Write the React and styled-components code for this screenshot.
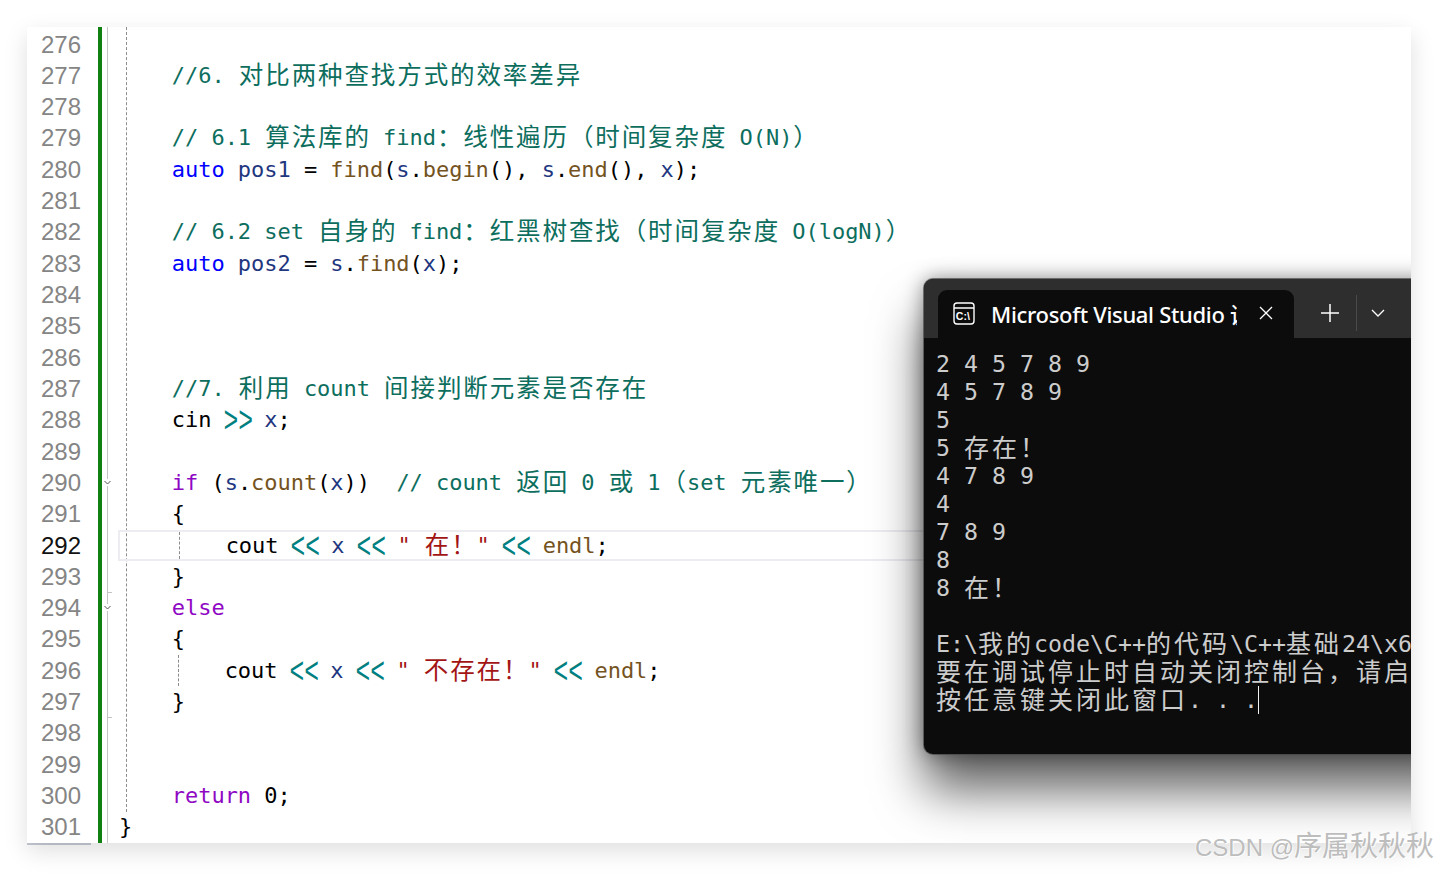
import React from "react";
import styled, { createGlobalStyle } from "styled-components";

const ROW_H = 31.32;

const GlobalStyle = createGlobalStyle`
  html, body {
    margin: 0;
    background: #fff;
  }
`;

const Page = styled.div`
  position: relative;
  width: 1438px;
  height: 873px;
  padding: 27px 27px 0;
  box-sizing: border-box;
  overflow: hidden;
`;

const Card = styled.div`
  position: relative;
  display: flex;
  height: 816px;
  padding-top: 1.5px;
  box-sizing: border-box;
  background: #fff;
  overflow: hidden;
  box-shadow: 0 8px 22px rgba(0, 0, 0, 0.13);
`;

const ScrollSliver = styled.div`
  width: 64px;
  height: 2px;
  background: #c6cbd6;
`;

const Gutter = styled.div`
  width: 71px;
  padding-left: 14px;
  box-sizing: border-box;
  flex: none;
`;

const LineNo = styled.div`
  height: ${ROW_H}px;
  line-height: ${ROW_H}px;
  font-family: "Liberation Sans", sans-serif;
  font-size: 24px;
  color: ${(p) => (p.$active ? "#111" : "#858585")};
`;

const ChangeBar = styled.div`
  width: 4px;
  flex: none;
  margin-top: -2px;
  background: #108010;
`;

const FoldColumn = styled.div`
  width: 17px;
  flex: none;
  margin-top: -2px;
  padding-top: 2px;
  position: relative;
  &::before {
    content: "";
    position: absolute;
    left: 5px;
    top: 0;
    bottom: 0;
    width: 1px;
    background: #c4c4c4;
  }
`;

const FoldCell = styled.div`
  position: relative;
  height: ${ROW_H}px;
  ${(p) =>
    p.$end &&
    `&::after {
      content: "";
      position: absolute;
      left: 5px;
      top: 0;
      width: 5px;
      height: 1px;
      background: #c4c4c4;
    }`}
`;

const FoldChevron = styled.svg`
  position: absolute;
  left: 1px;
  top: 12px;
  width: 9px;
  height: 7px;
  background: #fff;
`;

const CodeColumn = styled.div`
  position: relative;
  flex: 1;
  min-width: 0;
  &::before {
    content: "";
    position: absolute;
    left: 7px;
    top: -2px;
    height: 785px;
    border-left: 1px dashed #8c8c8c;
  }
`;

const Row = styled.div`
  position: relative;
  height: ${ROW_H}px;
  box-sizing: border-box;
  white-space: pre;
  font-family: "DejaVu Sans Mono", monospace;
  font-size: 22px;
  letter-spacing: -0.04px;
  line-height: ${ROW_H}px;
  color: #000;
  ${(p) =>
    p.$active &&
    `
    border: 2px solid #ececf1;
    border-right: 0;
    margin-left: -1px;
    padding-left: 0;
    line-height: ${ROW_H - 4}px;
  `}
  ${(p) =>
    p.$guide &&
    `&::before {
      content: "";
      position: absolute;
      left: 59px;
      top: 0;
      bottom: 0;
      border-left: 1px dashed #8c8c8c;
    }`}
`;

const colors = {
  comment: "#0d6e5e",
  keyword: "#0000ff",
  control: "#8f08c4",
  variable: "#1f377f",
  func: "#74531f",
  string: "#a31515",
  operator: "#008080",
  plain: "#000",
};

const Tok = styled.span`
  color: ${(p) => colors[p.$kind]};
`;

// the stream operators are drawn tall and thin in the editor font
const StreamOp = styled.span`
  display: inline-block;
  font-family: "Liberation Mono", monospace;
  letter-spacing: 0;
  color: ${colors.operator};
  transform: scale(1.12, 1.7);
  transform-origin: 50% 42%;
`;

const CodeCjk = styled.span`
  font-family: "Noto Sans CJK SC", sans-serif;
  font-size: 24.5px;
  letter-spacing: 1.9px;
  line-height: 0;
  vertical-align: -1px;
  margin: 0 -1px 0 1px;
`;

const splitCjk = (text) => text.split(/([\u3000-\u9fff\uff00-\uffef]+)/);

const CodeText = ({ kind, text }) =>
  kind === "operator" ? (
    <StreamOp>{text}</StreamOp>
  ) : (
    <Tok $kind={kind}>
      {splitCjk(text).map((part, i) =>
        i % 2 ? <CodeCjk key={i}>{part}</CodeCjk> : part
      )}
    </Tok>
  );

const C = "comment";
const K = "keyword";
const R = "control";
const V = "variable";
const F = "func";
const S = "string";
const O = "operator";
const P = "plain";

const cout = (msg) => [
  [P, "    cout "],
  [O, "<<"],
  [P, " "],
  [V, "x"],
  [P, " "],
  [O, "<<"],
  [P, " "],
  [S, msg],
  [P, " "],
  [O, "<<"],
  [P, " "],
  [F, "endl"],
  [P, ";"],
];

const lines = [
  { n: 276, code: [] },
  { n: 277, code: [[C, "    //6. 对比两种查找方式的效率差异"]] },
  { n: 278, code: [] },
  { n: 279, code: [[C, "    // 6.1 算法库的 find：线性遍历（时间复杂度 O(N)）"]] },
  {
    n: 280,
    code: [
      [K, "    auto "],
      [V, "pos1"],
      [P, " = "],
      [F, "find"],
      [P, "("],
      [V, "s"],
      [P, "."],
      [F, "begin"],
      [P, "(), "],
      [V, "s"],
      [P, "."],
      [F, "end"],
      [P, "(), "],
      [V, "x"],
      [P, ");"],
    ],
  },
  { n: 281, code: [] },
  { n: 282, code: [[C, "    // 6.2 set 自身的 find：红黑树查找（时间复杂度 O(logN)）"]] },
  {
    n: 283,
    code: [
      [K, "    auto "],
      [V, "pos2"],
      [P, " = "],
      [V, "s"],
      [P, "."],
      [F, "find"],
      [P, "("],
      [V, "x"],
      [P, ");"],
    ],
  },
  { n: 284, code: [] },
  { n: 285, code: [] },
  { n: 286, code: [] },
  { n: 287, code: [[C, "    //7. 利用 count 间接判断元素是否存在"]] },
  {
    n: 288,
    code: [
      [P, "    cin "],
      [O, ">>"],
      [P, " "],
      [V, "x"],
      [P, ";"],
    ],
  },
  { n: 289, code: [] },
  {
    n: 290,
    fold: true,
    code: [
      [R, "    if"],
      [P, " ("],
      [V, "s"],
      [P, "."],
      [F, "count"],
      [P, "("],
      [V, "x"],
      [P, "))  "],
      [C, "// count 返回 0 或 1（set 元素唯一）"],
    ],
  },
  { n: 291, code: [[P, "    {"]] },
  { n: 292, active: true, guide: true, code: [[P, "    "], ...cout('" 在！"')] },
  { n: 293, code: [[P, "    }"]] },
  { n: 294, fold: true, end: true, code: [[R, "    else"]] },
  { n: 295, code: [[P, "    {"]] },
  { n: 296, guide: true, code: [[P, "    "], ...cout('" 不存在！"')] },
  { n: 297, code: [[P, "    }"]] },
  { n: 298, end: true, code: [] },
  { n: 299, code: [] },
  {
    n: 300,
    code: [
      [R, "    return"],
      [P, " 0;"],
    ],
  },
  { n: 301, code: [[P, "}"]] },
];

const Terminal = styled.div`
  position: absolute;
  left: 897px;
  top: 252px;
  width: 620px;
  height: 475px;
  display: flex;
  flex-direction: column;
  border-radius: 9px;
  background: #0c0c0c;
  box-shadow: 0 0 0 1px rgba(70, 70, 70, 0.7), 0 36px 50px rgba(0, 0, 0, 0.62),
    0 0 20px rgba(0, 0, 0, 0.45);
  overflow: hidden;
`;

const TabBar = styled.div`
  display: flex;
  align-items: flex-end;
  flex: none;
  height: 59px;
  padding-left: 14px;
  background: #2e2e2e;
  border-radius: 9px 9px 0 0;
`;

const Tab = styled.div`
  display: flex;
  align-items: center;
  width: 356px;
  height: 48px;
  padding: 0 0 2px 15px;
  box-sizing: border-box;
  border-radius: 9px 9px 0 0;
  background: #0c0c0c;
  color: #fff;
`;

const TabIcon = styled.svg`
  width: 22px;
  height: 23px;
  flex: none;
  margin-right: 16px;
`;

const TabTitle = styled.div`
  width: 246px;
  margin-right: 1px;
  flex: none;
  padding-top: 2px;
  overflow: hidden;
  white-space: nowrap;
  font-family: "Noto Sans", "Noto Sans CJK SC", sans-serif;
  font-size: 22px;
  font-weight: 500;
  line-height: 30px;
  letter-spacing: -0.32px;
`;

const TabButton = styled.div`
  display: flex;
  align-items: center;
  justify-content: center;
  flex: none;
  width: ${(p) => p.$w}px;
  height: 48px;
  padding-left: ${(p) => p.$shift || 0}px;
  box-sizing: border-box;
  color: #fff;
`;

const NewTabGroup = styled.div`
  display: flex;
  align-items: center;
  height: 48px;
  padding-bottom: 2px;
  box-sizing: border-box;
`;

const Divider = styled.div`
  width: 1px;
  height: 36px;
  background: #4a4a4a;
`;

const Console = styled.div`
  flex: 1;
  padding: 12px 0 0 12px;
  font-family: "DejaVu Sans Mono", monospace;
  font-size: 23.25px;
  line-height: 28px;
  color: #cccccc;
  white-space: pre;
`;

const ConsoleLine = styled.div`
  height: 28px;
`;

const ConsoleCjk = styled.span`
  font-family: "Noto Sans CJK SC", sans-serif;
  font-size: 25px;
  letter-spacing: 3px;
  line-height: 0;
  vertical-align: -1px;
`;

const Caret = styled.span`
  display: inline-block;
  width: 1px;
  height: 28px;
  vertical-align: top;
  background: #f2f2f2;
`;

const Watermark = styled.div`
  position: absolute;
  left: 1195px;
  top: 830px;
  white-space: nowrap;
  font-family: "Liberation Sans", sans-serif;
  font-size: 24px;
  line-height: 36px;
  color: #bdbdbd;
  text-shadow: 1px 1px 0 rgba(255, 255, 255, 0.85), -1px 0 0 rgba(255, 255, 255, 0.5);
`;

const WatermarkCjk = styled.span`
  font-family: "Noto Sans CJK SC", sans-serif;
  font-size: 28px;
  line-height: 0;
`;

const consoleLines = [
  "2 4 5 7 8 9",
  "4 5 7 8 9",
  "5",
  "5 存在！",
  "4 7 8 9",
  "4",
  "7 8 9",
  "8",
  "8 在！",
  "",
  "E:\\我的code\\C++的代码\\C++基础24\\x6",
  "要在调试停止时自动关闭控制台，请启",
  "按任意键关闭此窗口. . .",
];

const App = () => (
  <Page>
    <GlobalStyle />
    <Card>
      <Gutter>
        {lines.map((l) => (
          <LineNo key={l.n} $active={l.active}>
            {l.n}
          </LineNo>
        ))}
      </Gutter>
      <ChangeBar />
      <FoldColumn>
        {lines.map((l) => (
          <FoldCell key={l.n} $end={l.end}>
            {l.fold && (
              <FoldChevron viewBox="0 0 9 7">
                <path d="M1.5 2 L4.5 5 L7.5 2" fill="none" stroke="#555" strokeWidth="1" />
              </FoldChevron>
            )}
          </FoldCell>
        ))}
      </FoldColumn>
      <CodeColumn>
        {lines.map((l) => (
          <Row key={l.n} $active={l.active} $guide={l.guide}>
            {l.code.map(([kind, text], i) => (
              <CodeText key={i} kind={kind} text={text} />
            ))}
          </Row>
        ))}
      </CodeColumn>
      <Terminal>
        <TabBar>
          <Tab>
            <TabIcon viewBox="0 0 22 23">
              <rect x="1" y="1" width="20" height="21" rx="3" fill="none" stroke="#fff" strokeWidth="1.4" />
              <path d="M1 6 H21" stroke="#fff" strokeWidth="1.4" />
              <text x="2.8" y="17.5" fill="#fff" fontSize="10.5" fontWeight="700" fontFamily="Liberation Sans, sans-serif">
                C:\
              </text>
            </TabIcon>
            <TabTitle>Microsoft Visual Studio 调试控制台</TabTitle>
            <TabButton $w={56}>
              <svg width="14" height="14" viewBox="0 0 14 14">
                <path d="M1 1 L13 13 M13 1 L1 13" stroke="#fff" strokeWidth="1.3" />
              </svg>
            </TabButton>
          </Tab>
          <NewTabGroup>
            <TabButton $w={62} $shift={10}>
              <svg width="20" height="20" viewBox="0 0 20 20">
                <path d="M10 1 V19 M1 10 H19" stroke="#fff" strokeWidth="1.5" />
              </svg>
            </TabButton>
            <Divider />
            <TabButton $w={41}>
              <svg width="14" height="8" viewBox="0 0 14 8">
                <path d="M1 1 L7 7 L13 1" fill="none" stroke="#fff" strokeWidth="1.3" />
              </svg>
            </TabButton>
          </NewTabGroup>
        </TabBar>
        <Console>
          {consoleLines.map((line, i) => (
            <ConsoleLine key={i}>
              {splitCjk(line).map((part, j) =>
                j % 2 ? <ConsoleCjk key={j}>{part}</ConsoleCjk> : part
              )}
              {i === consoleLines.length - 1 && <Caret />}
            </ConsoleLine>
          ))}
        </Console>
      </Terminal>
    </Card>
    <ScrollSliver />
    <Watermark>
      CSDN @<WatermarkCjk>序属秋秋秋</WatermarkCjk>
    </Watermark>
  </Page>
);

export default App;
